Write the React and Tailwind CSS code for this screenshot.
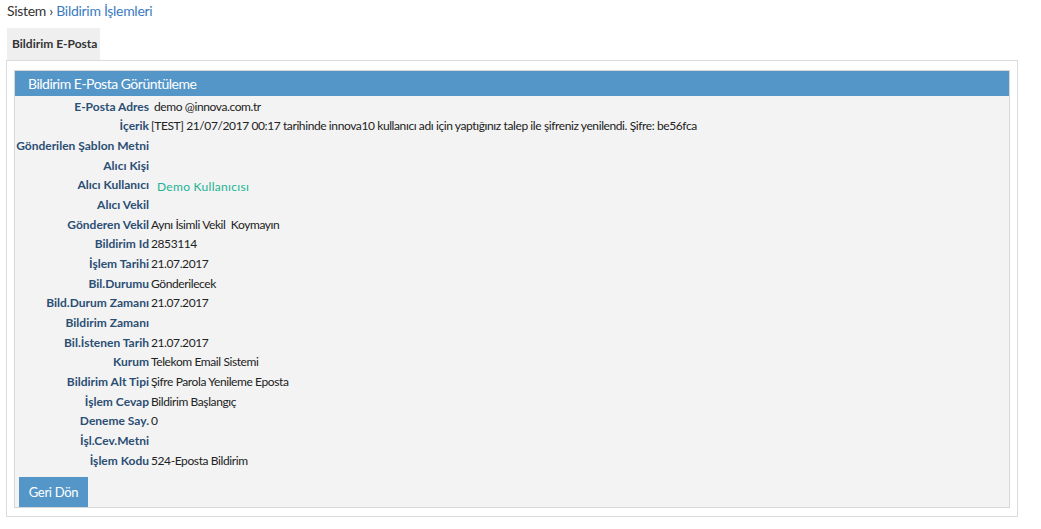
import React from "react";

const rows = [
  ["E-Posta Adres", "demo @innova.com.tr", "pl-[5px]"],
  ["İçerik", "[TEST] 21/07/2017 00:17 tarihinde innova10 kullanıcı adı için yaptığınız talep ile şifreniz yenilendi. Şifre: be56fca"],
  ["Gönderilen Şablon Metni", ""],
  ["Alıcı Kişi", ""],
  ["Alıcı Kullanıcı", "Demo Kullanıcısı", "teal"],
  ["Alıcı Vekil", ""],
  ["Gönderen Vekil", "Aynı İsimli Vekil  Koymayın"],
  ["Bildirim Id", "2853114"],
  ["İşlem Tarihi", "21.07.2017"],
  ["Bil.Durumu", "Gönderilecek"],
  ["Bild.Durum Zamanı", "21.07.2017"],
  ["Bildirim Zamanı", ""],
  ["Bil.İstenen Tarih", "21.07.2017"],
  ["Kurum", "Telekom Email Sistemi"],
  ["Bildirim Alt Tipi", "Şifre Parola Yenileme Eposta"],
  ["İşlem Cevap", "Bildirim Başlangıç"],
  ["Deneme Say.", "0"],
  ["İşl.Cev.Metni", ""],
  ["İşlem Kodu", "524-Eposta Bildirim"],
];

export default function App() {
  return (
    <div
      className="w-[1041px] h-[529px] bg-white text-[#333]"
      style={{ fontFamily: '"Lato", "Open Sans", sans-serif' }}
    >
      <div className="pl-[7px] pt-[2px] h-[28px] text-[14px] leading-[18px] tracking-[-0.3px]">
        <span className="text-[#333]">Sistem</span>
        <span className="text-[#333]"> › </span>
        <span className="text-[#3a7bbf]">Bildirim İşlemleri</span>
      </div>
      <div className="pl-[7px]">
        <div className="w-[93px] h-[32px] bg-[#efefef] flex items-center pl-[5px] text-[12px] font-bold text-[#333]">
          Bildirim E-Posta
        </div>
      </div>
      <div className="ml-[6px] w-[1012px] border border-[#dcdcdc] px-[7px] pt-[9px] pb-[8px]">
        <div className="border border-[#d6d6d6] bg-[#f3f3f3]">
          <div className="h-[25px] bg-[#5596c9] text-white text-[14px] tracking-[-0.5px] flex items-center pl-[13px]">
            Bildirim E-Posta Görüntüleme
          </div>
          <div className="flex flex-col pt-[1px]">
            {rows.map(([label, value, mod]) => (
              <div key={label} className="flex h-[19.67px] items-center">
                <div className="w-[134px] shrink-0 text-right font-bold text-[12px] text-[#2b4f74] whitespace-nowrap">
                  {label}
                </div>
                <div
                  className={
                    mod === "teal"
                      ? "pl-[8px] pt-[4px] text-[12px] text-[#1ab394] tracking-[0.3px]"
                      : mod
                      ? mod + " text-[12px] text-[#222] tracking-[-0.4px]"
                      : "pl-[2px] text-[12px] text-[#222] whitespace-pre tracking-[-0.4px]"
                  }
                >
                  {value}
                </div>
              </div>
            ))}
          </div>
          <div className="pt-[7px] pl-[4px]">
            <button className="w-[69px] h-[30px] bg-[#5596c9] text-white text-[13px] tracking-[-0.3px] flex items-center justify-center">
              Geri Dön
            </button>
          </div>
        </div>
      </div>
    </div>
  );
}
